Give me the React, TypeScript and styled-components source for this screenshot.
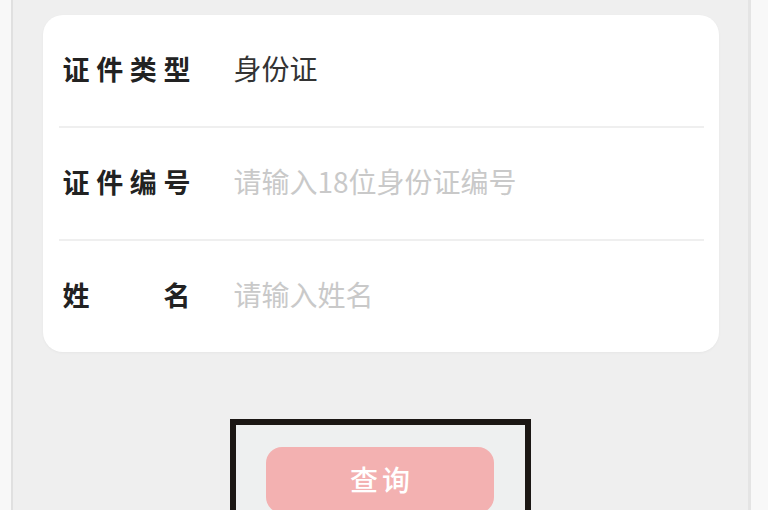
import { FC } from 'react';
import styled, { createGlobalStyle } from 'styled-components';

const GlobalStyle = createGlobalStyle`
	html, body {
		margin: 0;
		padding: 0;
		height: 100%;
		overflow: hidden;
		background: #f7f7f7;
		font-family: 'Noto Sans CJK SC', 'Noto Sans', sans-serif;
	}
	#root {
		height: 100%;
	}
`;

type FieldRowProps = {
	label: string;
	value?: string;
	placeholder?: string;
};

const FieldRow: FC<FieldRowProps> = ({ label, value, placeholder }) => (
	<Row>
		<Label>
			{label.split('').map((ch, i) => (
				<span key={i}>{ch}</span>
			))}
		</Label>
		{value ? <Value>{value}</Value> : <Input placeholder={placeholder} />}
	</Row>
);

const App: FC = () => (
	<>
		<GlobalStyle />
		<Page>
			<Gutter />
			<Main>
				<Card>
					<FieldRow label="证件类型" value="身份证" />
					<Divider />
					<FieldRow label="证件编号" placeholder="请输入18位身份证编号" />
					<Divider />
					<FieldRow label="姓名" placeholder="请输入姓名" />
				</Card>
				<ButtonFrame>
					<QueryButton>查询</QueryButton>
				</ButtonFrame>
			</Main>
			<Gutter $right />
		</Page>
	</>
);

export default App;

const Page = styled.div`
	display: flex;
	height: 100%;
`;

const Gutter = styled.div<{ $right?: boolean }>`
	width: ${(p) => (p.$right ? '17px' : '11px')};
	flex-shrink: 0;
	background: #f8f8f8;
	${(p) => (p.$right ? 'border-left: 3px solid #e4e4e4;' : 'border-right: 2px solid #e0e0e0;')}
`;

const Main = styled.div`
	flex: 1;
	display: flex;
	flex-direction: column;
	align-items: center;
	background: #efefef;
	padding: 15px 0 0;
`;

const Card = styled.div`
	width: 676px;
	box-sizing: border-box;
	background: #fff;
	border-radius: 20px;
	box-shadow: 0 1px 3px rgba(0, 0, 0, 0.04);
`;

const Row = styled.div`
	display: flex;
	align-items: center;
	height: 111px;
	box-sizing: border-box;
	padding: 0 20px 5px;
`;

const Label = styled.div`
	display: flex;
	justify-content: space-between;
	width: 128px;
	flex-shrink: 0;
	margin-right: 43px;
	font-size: 27px;
	font-weight: 700;
	color: #222;
`;

const Value = styled.div`
	font-size: 28px;
	color: #333;
`;

const Input = styled.input`
	flex: 1;
	border: none;
	outline: none;
	padding: 0;
	background: transparent;
	font-family: inherit;
	font-size: 28px;
	color: #333;
	&::placeholder {
		color: #c9c9c9;
	}
`;

const Divider = styled.div`
	height: 2px;
	margin: 0 15px 0 16px;
	background: #efefef;
`;

const ButtonFrame = styled.div`
	margin-top: 67px;
	width: 301px;
	box-sizing: border-box;
	border: 6px solid #1b1714;
	background: #eef0f0;
	padding: 22px 31px 30px 30px;
`;

const QueryButton = styled.button`
	display: block;
	width: 100%;
	height: 66px;
	border: none;
	border-radius: 16px;
	background: #f3b1b1;
	color: #fff;
	font-family: inherit;
	font-size: 28px;
	font-weight: 500;
	letter-spacing: 4px;
	padding: 0 0 2px 4px;
`;
